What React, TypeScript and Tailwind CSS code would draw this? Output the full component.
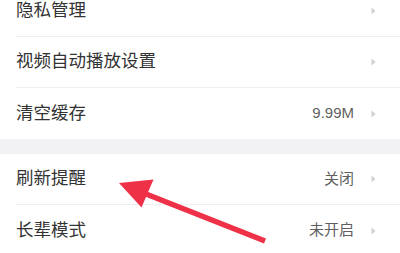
import React from "react";

type Row = { label: string; value?: string };

const Chevron = () => (
  <svg width="5" height="8" viewBox="0 0 5 8" className="shrink-0">
    <path d="M0.5 0.5 L4.5 4 L0.5 7.5 Z" fill="#d0d0d0" />
  </svg>
);

const RowItem = ({ row, last }: { row: Row; last?: boolean }) => (
  <div className="pl-[16px]">
    <div
      className={
        "h-[51px] flex items-center pr-[24px] " +
        (last ? "" : "border-b border-[#efeff1]")
      }
    >
      <span className="text-[17.5px] text-[#333333] flex-1 pb-[1px]">{row.label}</span>
      {row.value && (
        <span className="text-[15px] text-[#5f5f5f] mr-[17px]">{row.value}</span>
      )}
      <Chevron />
    </div>
  </div>
);

export default function App() {
  const g1: Row[] = [
    { label: "隐私管理" },
    { label: "视频自动播放设置" },
    { label: "清空缓存", value: "9.99M" },
  ];
  const g2: Row[] = [
    { label: "刷新提醒", value: "关闭" },
    { label: "长辈模式", value: "未开启" },
  ];
  return (
    <div
      className="relative w-[400px] h-[253px] overflow-hidden bg-white"
      style={{ fontFamily: '"Liberation Sans", "Noto Sans CJK SC", sans-serif' }}
    >
      <div className="-mt-[14px]">
        {g1.map((r, i) => (
          <RowItem key={r.label} row={r} last={i === g1.length - 1} />
        ))}
        <div className="h-[15px] bg-[#f2f2f4]" />
        {g2.map((r, i) => (
          <RowItem key={r.label} row={r} last={i === g2.length - 1} />
        ))}
      </div>
      <svg
        className="absolute left-0 top-0 pointer-events-none"
        width="400"
        height="253"
        viewBox="0 0 400 253"
      >
        <line x1="146" y1="194" x2="265" y2="241" stroke="#ef3148" strokeWidth="5.5" />
        <polygon points="119,183 153.5,179.5 141.5,207.5" fill="#ef3148" />
      </svg>
    </div>
  );
}
